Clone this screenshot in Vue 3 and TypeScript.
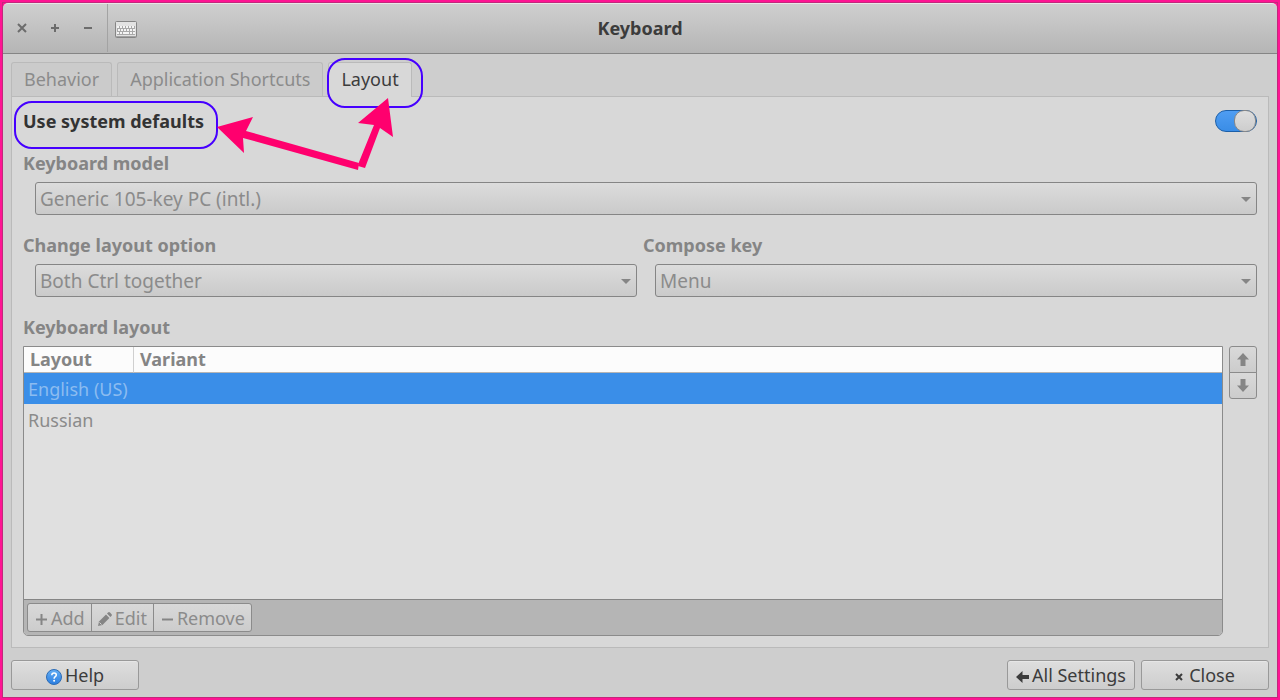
<script setup lang="ts">
import { ref } from 'vue'

interface LayoutRow {
  layout: string
  variant: string
}

const tabs: string[] = ['Behavior', 'Application Shortcuts', 'Layout']
const activeTab = ref('Layout')
const useDefaults = ref(true)
const rows: LayoutRow[] = [
  { layout: 'English (US)', variant: '' },
  { layout: 'Russian', variant: '' },
]
const selectedRow = ref(0)
const keyColumns = [0, 1, 2, 3, 4, 5]
</script>

<template>
  <div class="window">
    <header class="titlebar">
      <div class="controls">
        <button type="button" aria-label="Close window">
          <svg width="10" height="10" viewBox="0 0 10 10"><path d="M1 1l8 8M9 1l-8 8" /></svg>
        </button>
        <button type="button" aria-label="Maximize window">
          <svg width="10" height="10" viewBox="0 0 10 10"><path d="M5 1v8M1 5h8" /></svg>
        </button>
        <button type="button" aria-label="Minimize window">
          <svg width="10" height="10" viewBox="0 0 10 10"><path d="M1 5h8" /></svg>
        </button>
      </div>
      <svg class="app-icon" width="22" height="17" viewBox="0 0 22 17">
        <rect x=".5" y=".5" width="21" height="16" rx="1" fill="#e2e2e2" stroke="#858585" />
        <rect x="2" y="5" width="18" height="9" fill="#a9a9a9" />
        <g fill="#f4f4f4">
          <rect v-for="c in keyColumns" :key="`a${c}`" :x="c * 3 + 2" y="5" width="2" height="2" />
          <rect v-for="c in keyColumns" :key="`b${c}`" :x="c * 3 + 3" y="8" width="2" height="2" />
          <path d="M2 11h2v2H2zM5 11h2v2H5zM8 11h6v2H8zM15 11h2v2h-2zM18 11h2v2h-2z" />
        </g>
        <path d="M1 15.500h20" stroke="#a3a3a3" />
      </svg>
      <h1>Keyboard</h1>
    </header>

    <main class="body">
      <div class="tabs" role="tablist">
        <button
          v-for="tab in tabs"
          :key="tab"
          type="button"
          role="tab"
          class="tab"
          :class="{ active: tab === activeTab }"
          :aria-selected="tab === activeTab"
          @click="activeTab = tab"
        >
          {{ tab }}
          <span v-if="tab === 'Layout'" class="ring ring-tab"></span>
        </button>
      </div>

      <section class="panel" role="tabpanel">
        <div class="defaults">
          <label for="defaults" class="heading strong">Use system defaults<span class="ring ring-label"></span></label>
          <input id="defaults" v-model="useDefaults" class="switch" type="checkbox" role="switch" />
        </div>

        <div class="field">
          <label for="model" class="heading">Keyboard model</label>
          <div class="select">
            <select id="model" :disabled="useDefaults"><option>Generic 105-key PC (intl.)</option></select>
            <svg width="10" height="5" viewBox="0 0 10 5"><path d="M0 0h10L5 5z" fill="#858585" /></svg>
          </div>
        </div>

        <div class="pair">
          <div class="field">
            <label for="option" class="heading">Change layout option</label>
            <div class="select">
              <select id="option" :disabled="useDefaults"><option>Both Ctrl together</option></select>
              <svg width="10" height="5" viewBox="0 0 10 5"><path d="M0 0h10L5 5z" fill="#858585" /></svg>
            </div>
          </div>
          <div class="field">
            <label for="compose" class="heading">Compose key</label>
            <div class="select">
              <select id="compose" :disabled="useDefaults"><option>Menu</option></select>
              <svg width="10" height="5" viewBox="0 0 10 5"><path d="M0 0h10L5 5z" fill="#858585" /></svg>
            </div>
          </div>
        </div>

        <div class="layouts">
          <h2 id="layouts-title" class="heading">Keyboard layout</h2>
          <div class="layouts-row">
            <div class="list">
              <div class="rows">
                <table aria-labelledby="layouts-title">
                  <thead>
                    <tr><th class="first" scope="col">Layout</th><th scope="col">Variant</th></tr>
                  </thead>
                  <tbody>
                    <tr v-for="(row, i) in rows" :key="row.layout" :class="{ selected: i === selectedRow }">
                      <td>{{ row.layout }}</td><td>{{ row.variant }}</td>
                    </tr>
                  </tbody>
                </table>
              </div>
              <div class="toolbar">
                <button type="button" :disabled="useDefaults">
                  <svg width="11" height="11" viewBox="0 0 11 11"><path d="M5.5 0v11M0 5.5h11" stroke="#858585" stroke-width="2" /></svg>
                  Add
                </button>
                <button type="button" :disabled="useDefaults">
                  <svg width="14" height="14" viewBox="0 0 14 14" fill="#858585">
                    <path d="M0 14l1-4.5L8 2.6l3.400 3.4L4.5 13z" />
                    <path d="M9 1.600l1-1q1-1 2 0L13.4 2q1 1 0 2l-1 1z" />
                    <path d="M1.5 10.5l2 2" stroke="#d4d4d4" />
                  </svg>
                  Edit
                </button>
                <button type="button" :disabled="useDefaults">
                  <svg width="11" height="11" viewBox="0 0 11 11"><path d="M0 5.5h11" stroke="#858585" stroke-width="2" /></svg>
                  Remove
                </button>
              </div>
            </div>
            <div class="order">
              <button type="button" aria-label="Move up" :disabled="useDefaults">
                <svg width="12" height="13" viewBox="0 0 12 13"><path d="M6 0l6 6.5H8.5V13h-5V6.5H0z" fill="#858585" /></svg>
              </button>
              <button type="button" aria-label="Move down" :disabled="useDefaults">
                <svg width="12" height="13" viewBox="0 0 12 13"><path d="M6 13l6-6.5H8.5V0h-5v6.5H0z" fill="#858585" /></svg>
              </button>
            </div>
          </div>
        </div>
        <svg class="arrows" width="180" height="76" viewBox="0 0 180 76" fill="#ff006e" aria-hidden="true">
          <path d="M0 29L36 19l-7 14 113 32-1 7L26 40l1 15z" />
          <path d="M171 0L141 25l16 2-15 37-1 4 7 2 15-40 13 9z" />
        </svg>
      </section>

      <footer class="footer">
        <button type="button">
          <svg class="help-icon" width="16" height="16" viewBox="0 0 16 16">
            <defs>
              <linearGradient id="help-fill" x1="0" y1="0" x2="0" y2="1">
                <stop offset="0" stop-color="#64aff5" /><stop offset="1" stop-color="#2a7de0" />
              </linearGradient>
            </defs>
            <circle cx="8" cy="8" r="7.5" fill="url(#help-fill)" stroke="#2d6cb5" />
            <path d="M5.8 6.2C5.8 3.2 10.3 3.4 10.3 6c0 1.8-2.2 1.6-2.2 3.7" fill="none" stroke="#fff" stroke-width="1.5" />
            <circle cx="8.1" cy="11.8" r="1" fill="#fff" />
          </svg>
          Help
        </button>
        <span class="spacer"></span>
        <button type="button">
          <svg width="13" height="12" viewBox="0 0 13 12"><path d="M0 6l6.5-6v4H13v4H6.5v4z" fill="#3c3c3c" /></svg>
          All Settings
        </button>
        <button type="button">
          <svg class="cross" width="8" height="8" viewBox="0 0 8 8"><path d="M1 1l6 6M7 1L1 7" stroke="#3c3c3c" stroke-width="2" /></svg>
          Close
        </button>
      </footer>
    </main>
  </div>
</template>

<style>
body {
  margin: 0;
  background: #ff1493;
}
</style>

<style scoped>
* {
  box-sizing: border-box;
}
.window {
  display: flex;
  flex-direction: column;
  min-height: 100vh;
  padding: 1px;
  border: 2px solid #ff1493;
  background: #ff1493;
  box-shadow: inset 0 0 0 1px #c4277c;
  color: #3c3c3c;
  font: 18px/24px "Noto Sans", sans-serif;
}
button,
select {
  margin: 0;
  font: inherit;
  color: inherit;
}
.titlebar {
  position: relative;
  display: grid;
  grid-template-columns: 1fr auto 1fr;
  align-items: center;
  height: 51px;
  padding-bottom: 1px;
  border-top: 1px solid #e8e8e8;
  border-bottom: 1px solid #858585;
  border-radius: 5px 5px 0 0;
  background: linear-gradient(#cfcfcf, #b5b5b5);
}
.controls {
  display: flex;
  align-self: stretch;
  width: 105px;
  padding: 0 3px;
  border-right: 1px solid #a3a3a3;
}
.controls button {
  display: flex;
  flex: 1;
  align-items: center;
  justify-content: center;
  padding: 0;
  border: 0;
  background: none;
}
.controls path {
  stroke: #6c6c6c;
  stroke-width: 2;
}
.app-icon {
  position: absolute;
  left: 112px;
  top: 17px;
}
h1 {
  margin: 0;
  font-size: 18px;
  line-height: 24px;
}
.body {
  display: flex;
  flex: 1;
  flex-direction: column;
  padding: 8px 8px 7px;
  background: #cecece;
}
.tabs {
  display: flex;
  gap: 5px;
}
.tab {
  position: relative;
  height: 34px;
  padding: 0 12px 1px;
  border: 1px solid #bababa;
  border-bottom: 0;
  border-radius: 3px 3px 0 0;
  background: #cbcbcb;
  color: #8b8b8b;
}
.tab.active {
  z-index: 1;
  height: 35px;
  margin-bottom: -1px;
  padding-bottom: 2px;
  background: #d8d8d8;
  color: #3c3c3c;
}
.ring {
  position: absolute;
  border: 2px solid #4600ff;
  border-radius: 18px;
  pointer-events: none;
}
.ring-tab {
  inset: -5px -12px -11px -2px;
}
.panel {
  position: relative;
  display: flex;
  flex: 1;
  flex-direction: column;
  gap: 18px;
  padding: 12px 11px 11px;
  border: 1px solid #bababa;
  background: #d8d8d8;
}
.heading {
  display: block;
  margin: 0;
  color: #858585;
  font-size: 18px;
  line-height: 24px;
  font-weight: 700;
}
.heading.strong {
  position: relative;
  color: #333;
}
.ring-label {
  inset: -8px -14px -16px -9px;
}
.defaults {
  display: flex;
  align-items: center;
  justify-content: space-between;
}
.switch {
  appearance: none;
  display: flex;
  align-items: center;
  width: 42px;
  height: 22px;
  margin: 0;
  border: 1px solid #1c5fa8;
  border-radius: 11px;
  background: linear-gradient(#4f9df2, #3a8de6);
}
.switch::before {
  content: "";
  width: 20px;
  height: 20px;
  border: 1px solid #888;
  border-radius: 10px;
  background: linear-gradient(#dedede, #cdcdcd);
}
.switch:checked {
  justify-content: flex-end;
}
.select {
  position: relative;
  margin: 7px 0 0 12px;
}
.select svg {
  position: absolute;
  right: 6px;
  top: 15px;
}
.select select {
  appearance: none;
  display: block;
  width: 100%;
  height: 33px;
  padding: 0 24px 0 4px;
  border: 1px solid #858585;
  border-radius: 3px;
  background: linear-gradient(#dcdcdc, #cacaca);
  color: #8b8b8b;
  font-size: 19px;
  opacity: 1;
}
.pair {
  display: grid;
  grid-template-columns: 1fr 1fr;
  gap: 6px;
}
.layouts,
.layouts-row {
  display: flex;
  flex: 1;
}
.layouts {
  flex-direction: column;
  gap: 7px;
}
.layouts-row {
  align-items: stretch;
  gap: 6px;
}
.list {
  display: flex;
  flex: 1;
  flex-direction: column;
  overflow: hidden;
  border: 1px solid #8b8b8b;
  border-radius: 0 0 5px 5px;
  background: #e0e0e0;
}
.rows {
  flex: 1;
}
table {
  width: 100%;
  border-collapse: separate;
  border-spacing: 0;
  color: #8b8b8b;
}
th {
  height: 26px;
  padding: 0 6px 1px;
  border-bottom: 1px solid #b5b5b5;
  background: #fcfcfc;
  color: #858585;
  text-align: left;
}
th.first {
  width: 110px;
  border-right: 1px solid #d0d0d0;
}
td {
  height: 31px;
  padding: 0 0 0 4px;
  white-space: nowrap;
}
.selected td {
  background: #3a8ee8;
  color: #8cbcf0;
}
.toolbar {
  display: flex;
  padding: 3px;
  border-top: 1px solid #858585;
  background: #b5b5b5;
}
.toolbar button,
.order button {
  display: flex;
  align-items: center;
  justify-content: center;
  border: 1px solid #8b8b8b;
  background: linear-gradient(#d9d9d9, #cccccc);
  color: #8b8b8b;
}
.toolbar button {
  height: 29px;
  gap: 4px;
  padding: 0 6px 0 8px;
}
.toolbar button + button {
  margin-left: -1px;
}
.toolbar button:nth-child(2) {
  gap: 3px;
  padding-left: 6px;
}
.toolbar svg {
  margin-top: 3px;
}
.toolbar button:first-child {
  border-radius: 3px 0 0 3px;
}
.toolbar button:last-child {
  border-radius: 0 3px 3px 0;
}
.order button {
  width: 28px;
  height: 27px;
  padding: 0;
}
.order button:first-child {
  border-radius: 3px 3px 0 0;
}
.order button:last-child {
  margin-top: -1px;
  border-radius: 0 0 3px 3px;
}
.arrows {
  position: absolute;
  z-index: 2;
  left: 205px;
  top: 1px;
  pointer-events: none;
}
.footer {
  display: flex;
  gap: 6px;
  margin-top: 12px;
}
.footer button {
  display: flex;
  align-items: center;
  justify-content: center;
  gap: 3px;
  width: 128px;
  height: 30px;
  padding: 0;
  border: 1px solid #999;
  border-radius: 3px;
  background: linear-gradient(#dedede, #cdcdcd);
  box-shadow: inset 0 1px 0 #e6e6e6;
  white-space: nowrap;
}
.footer svg {
  margin-top: 3px;
}
.footer .cross {
  margin-right: 3px;
}
.spacer {
  flex: 1;
}
</style>
